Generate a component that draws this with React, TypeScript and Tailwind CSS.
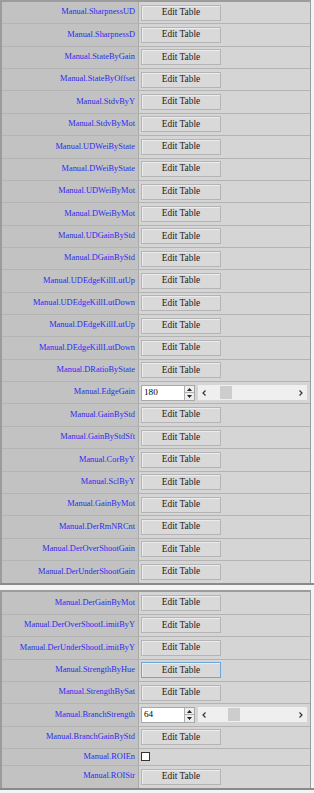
import React from 'react'

type Row = {
  name: string
  kind: 'table' | 'slider' | 'check'
  value?: string
  thumb?: string
  focused?: boolean
  h?: string
}

const firstRows: Row[] = [
  { name: 'Manual.SharpnessUD', kind: 'table' },
  { name: 'Manual.SharpnessD', kind: 'table' },
  { name: 'Manual.StateByGain', kind: 'table' },
  { name: 'Manual.StateByOffset', kind: 'table' },
  { name: 'Manual.StdvByY', kind: 'table' },
  { name: 'Manual.StdvByMot', kind: 'table' },
  { name: 'Manual.UDWeiByState', kind: 'table' },
  { name: 'Manual.DWeiByState', kind: 'table' },
  { name: 'Manual.UDWeiByMot', kind: 'table' },
  { name: 'Manual.DWeiByMot', kind: 'table' },
  { name: 'Manual.UDGainByStd', kind: 'table' },
  { name: 'Manual.DGainByStd', kind: 'table' },
  { name: 'Manual.UDEdgeKillLutUp', kind: 'table' },
  { name: 'Manual.UDEdgeKillLutDown', kind: 'table' },
  { name: 'Manual.DEdgeKillLutUp', kind: 'table' },
  { name: 'Manual.DEdgeKillLutDown', kind: 'table' },
  { name: 'Manual.DRatioByState', kind: 'table' },
  { name: 'Manual.EdgeGain', kind: 'slider', value: '180', thumb: 'ml-[10px]' },
  { name: 'Manual.GainByStd', kind: 'table' },
  { name: 'Manual.GainByStdSft', kind: 'table' },
  { name: 'Manual.CorByY', kind: 'table' },
  { name: 'Manual.SclByY', kind: 'table' },
  { name: 'Manual.GainByMot', kind: 'table' },
  { name: 'Manual.DerRmNRCnt', kind: 'table' },
  { name: 'Manual.DerOverShootGain', kind: 'table' },
  { name: 'Manual.DerUnderShootGain', kind: 'table' },
]

const secondRows: Row[] = [
  { name: 'Manual.DerGainByMot', kind: 'table' },
  { name: 'Manual.DerOverShootLimitByY', kind: 'table' },
  { name: 'Manual.DerUnderShootLimitByY', kind: 'table' },
  { name: 'Manual.StrengthByHue', kind: 'table', focused: true },
  { name: 'Manual.StrengthBySat', kind: 'table' },
  { name: 'Manual.BranchStrength', kind: 'slider', value: '64', thumb: 'ml-[18px]' },
  { name: 'Manual.BranchGainByStd', kind: 'table' },
  { name: 'Manual.ROIEn', kind: 'check', h: 'h-[16.5px]' },
  { name: 'Manual.ROIStr', kind: 'table' },
]

function EditButton({ focused }: { focused?: boolean }) {
  return (
    <button
      className={`ml-[2px] w-[80px] h-[16px] flex items-center justify-center bg-[#d9d9d9] text-[9.4px] leading-none text-[#1c1c1c] font-['Liberation_Serif',serif] shadow-[inset_1px_1px_0_#ececec] border ${
        focused ? 'border-[#6ea6d8]' : 'border-[#b4b4b4]'
      }`}
    >
      Edit Table
    </button>
  )
}

function Slider({ value, thumb }: { value: string; thumb: string }) {
  return (
    <div className="ml-[2px] flex items-center">
      {/* number box with spinner */}
      <div className="flex h-[16px] border border-[#a8a8a8] bg-white">
        <div className="w-[42px] pl-[2px] flex items-center text-[9.2px] font-['Liberation_Serif',serif] text-black">
          {value}
        </div>
        <div className="w-[10px] flex flex-col border-l border-[#b0b0b0] bg-[#eeeeee]">
          <div className="flex-1 flex items-center justify-center border-b border-[#b0b0b0]">
            <svg width="5" height="3" viewBox="0 0 5 3">
              <polygon points="2.5,0 5,3 0,3" fill="#222" />
            </svg>
          </div>
          <div className="flex-1 flex items-center justify-center">
            <svg width="5" height="3" viewBox="0 0 5 3">
              <polygon points="0,0 5,0 2.5,3" fill="#222" />
            </svg>
          </div>
        </div>
      </div>
      {/* scrollbar */}
      <div className="ml-[3px] w-[109px] h-[15px] flex items-center bg-[#efefef]">
        <div className="w-[12px] flex items-center justify-center">
          <svg width="4" height="6" viewBox="0 0 4 6">
            <polyline points="3.5,0.5 1,3 3.5,5.5" fill="none" stroke="#333" strokeWidth="1.2" />
          </svg>
        </div>
        <div className="flex-1 h-full flex items-center">
          <div className={`${thumb} w-[12px] h-[13px] bg-[#cdcdcd]`} />
        </div>
        <div className="w-[12px] flex items-center justify-center">
          <svg width="4" height="6" viewBox="0 0 4 6">
            <polyline points="0.5,0.5 3,3 0.5,5.5" fill="none" stroke="#333" strokeWidth="1.2" />
          </svg>
        </div>
      </div>
    </div>
  )
}

function ParamTable({ rows, rowH }: { rows: Row[]; rowH: string }) {
  return (
    <div className="w-[314px] border-b-2 border-[#8a8a8a]">
      <div className="w-[311px] border-t-2 border-l-2 border-r border-[#9c9c9c]">
        {rows.map((row) => (
          <div
            key={row.name}
            className={`flex border-b border-[#b3b3b3] last:border-b-0 ${row.h ?? rowH}`}
          >
            <div className="w-[137px] shrink-0 flex items-center justify-end pr-[3px] bg-[#c2c2c2] border-r border-[#a9a9a9] text-[8.4px] text-[#2b2bf0] font-['Liberation_Serif',serif] whitespace-nowrap">
              {row.name}
            </div>
            <div className="flex-1 flex items-center bg-[#d5d5d5]">
              {row.kind === 'table' && <EditButton focused={row.focused} />}
              {row.kind === 'slider' && <Slider value={row.value!} thumb={row.thumb!} />}
              {row.kind === 'check' && (
                <div className="ml-[2px] w-[9px] h-[9px] border border-[#333] bg-white" />
              )}
            </div>
          </div>
        ))}
      </div>
    </div>
  )
}

export default function App() {
  return (
    <div className="w-[314px] h-[793px] bg-[#f4f4f4] overflow-hidden">
      <ParamTable rows={firstRows} rowH="h-[22.36px]" />
      <div className="h-[5px]" />
      <ParamTable rows={secondRows} rowH="h-[22.4px]" />
    </div>
  )
}
